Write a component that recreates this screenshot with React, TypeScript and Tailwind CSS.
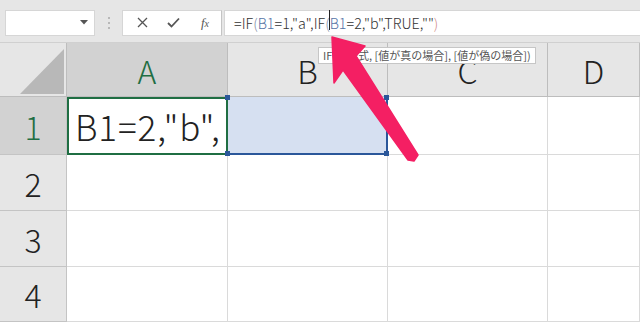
import React from "react";

function Caret() {
  return (
    <svg width="8" height="5" viewBox="0 0 8 5" className="text-[#555]">
      <polygon points="0,0 8,0 4,4.5" fill="currentColor" />
    </svg>
  );
}

function FormulaBar() {
  const ref = "text-[#5573a6]";
  return (
    <div className="flex h-[43px] items-center bg-[#e6e6e6] pl-[5px] pt-[3px] border-b border-[#d0d0d0]">
      <div className="flex h-[26px] w-[90px] items-center justify-end bg-white border border-[#d6d6d6] pr-[6px]">
        <Caret />
      </div>
      <div className="flex w-[27px] flex-col items-center gap-[3px]">
        <span className="h-[2px] w-[2px] rounded-full bg-[#a8a8a8]" />
        <span className="h-[2px] w-[2px] rounded-full bg-[#a8a8a8]" />
        <span className="h-[2px] w-[2px] rounded-full bg-[#a8a8a8]" />
      </div>
      <div className="flex h-[26px] w-[100px] items-center bg-white border border-[#d6d6d6] border-r-[#c4c4c4]">
        <div className="flex w-[34px] justify-center pl-[4px]">
          <svg width="11" height="11" viewBox="0 0 11 11">
            <path d="M1 1 L10 10 M10 1 L1 10" stroke="#555" strokeWidth="1.3" />
          </svg>
        </div>
        <div className="flex w-[32px] justify-center">
          <svg width="13" height="11" viewBox="0 0 13 11">
            <path d="M1 6 L4.5 9.5 L12 1.5" stroke="#555" strokeWidth="1.8" fill="none" />
          </svg>
        </div>
        <div className="flex w-[32px] justify-center font-['Liberation_Serif',serif] text-[13px] italic text-[#555]">
          <span>f</span>
          <span className="text-[10px] pt-[3px]">x</span>
        </div>
      </div>
      <div className="ml-[2px] flex h-[26px] flex-1 items-center bg-white border border-[#d6d6d6] border-r-0 pl-[9px] font-['Noto_Sans_CJK_JP',sans-serif] text-[14.3px] font-light text-[#333]">
        <span>=IF</span>
        <span className="text-[#7b8aa3]">(</span>
        <span className={ref}>B1</span>
        <span>=1,"a",IF</span>
        <span className="text-[#7b8aa3]">(</span>
        <span className="relative">
          <span className="absolute left-[-1px] top-[-2px] h-[20px] w-[1px] bg-[#222]" />
          <span className={ref}>B1</span>
        </span>
        <span>=2,"b",TRUE,""</span>
        <span className="text-[#d08a8a]">)</span>
      </div>
    </div>
  );
}

function Corner() {
  return (
    <div className="bg-[#e6e6e6] border-r border-b border-[#bdbdbd]">
      <svg width="66" height="53" viewBox="0 0 66 53">
        <polygon points="64,6 64,51 20,51" fill="#b8b8b8" />
      </svg>
    </div>
  );
}

function ColHead({ label, selected }: { label: string; selected?: boolean }) {
  return (
    <div
      className={
        "flex items-center justify-center border-r border-b border-[#bdbdbd] text-[32px] font-light " +
        (selected ? "bg-[#d2d2d2] text-[#1f6e43]" : "bg-[#e6e6e6] text-[#222]")
      }
    >
      {label}
    </div>
  );
}

function RowHead({ label, selected }: { label: string; selected?: boolean }) {
  return (
    <div
      className={
        "flex items-center justify-center border-r border-b border-[#c4c4c4] text-[32px] font-light " +
        (selected ? "bg-[#d2d2d2] text-[#1f6e43]" : "bg-[#e6e6e6] text-[#222]")
      }
    >
      {label}
    </div>
  );
}

function Cell() {
  return <div className="bg-white border-r border-b border-[#dadada]" />;
}

function Handle({ className }: { className: string }) {
  return <span className={"absolute h-[5px] w-[5px] bg-[#2b579a] " + className} />;
}

export default function App() {
  return (
    <div className="relative h-[322px] w-[640px] overflow-hidden bg-white font-['Noto_Sans_CJK_JP',sans-serif]">
      <FormulaBar />
      <div className="grid grid-cols-[67px_161px_160px_160px_1fr] grid-rows-[54px_58px_56px_56px_1fr] h-[279px]">
        <Corner />
        <ColHead label="A" selected />
        <ColHead label="B" />
        <ColHead label="C" />
        <ColHead label="D" />

        <RowHead label="1" selected />
        <div className="flex items-center overflow-hidden whitespace-nowrap border-2 border-[#1f6e43] bg-white pl-[6px] text-[35px] tracking-[0.9px] font-light text-[#222]">
          B1=2,"b",
        </div>
        <div className="relative bg-[#d6e0f1] border-r-2 border-b-2 border-[#2b579a]">
          <Handle className="left-[-3px] top-[-2px]" />
          <Handle className="right-[-3px] top-[-2px]" />
          <Handle className="left-[-3px] bottom-[-3px]" />
          <Handle className="right-[-3px] bottom-[-3px]" />
        </div>
        <Cell />
        <Cell />

        <RowHead label="2" />
        <Cell />
        <Cell />
        <Cell />
        <Cell />

        <RowHead label="3" />
        <Cell />
        <Cell />
        <Cell />
        <Cell />

        <RowHead label="4" />
        <Cell />
        <Cell />
        <Cell />
        <Cell />
      </div>

      <div className="absolute left-[318px] top-[47px] flex h-[17px] items-center border border-[#c6c6c6] bg-white px-[4px] text-[11px] text-[#555] whitespace-nowrap">
        IF(論理式, [値が真の場合], [値が偽の場合])
      </div>

      <svg className="pointer-events-none absolute left-0 top-0" width="640" height="322" viewBox="0 0 640 322">
        <polygon
          points="332,37 365,46 356,56 418,155 414,161 408,160 343,70 334,83"
          fill="#f41f63"
          stroke="#f41f63"
          strokeWidth="1.5"
          strokeLinejoin="round"
        />
      </svg>
    </div>
  );
}
